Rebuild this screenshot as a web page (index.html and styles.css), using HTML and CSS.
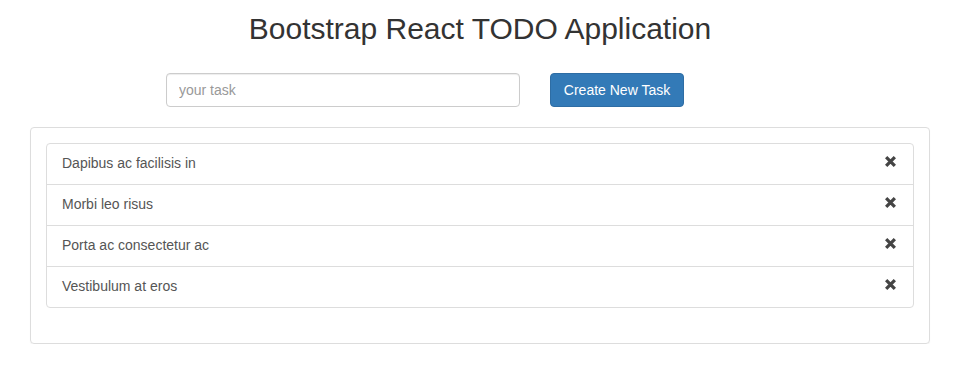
FILE: index.html
```html
<!DOCTYPE html>
<html lang="en">
<head>
    <meta charset="UTF-8">
    <meta name="viewport" content="width=device-width, initial-scale=1.0">
    <title>Bootstrap React TODO Application</title>
    <link rel="stylesheet" href="styles.css">
</head>
<body>
    <div class="container">
        <h1 class="title">Bootstrap React TODO Application</h1>
        <form class="task-form" onsubmit="event.preventDefault();">
            <input type="text" class="task-input" placeholder="your task">
            <button type="submit" class="btn-primary">Create New Task</button>
        </form>
        <div class="panel">
            <ul class="list-group">
                <li class="list-item">
                    <span>Dapibus ac facilisis in</span>
                    <svg class="remove" viewBox="0 0 12 12"><path d="M2 2 L10 10 M10 2 L2 10"/></svg>
                </li>
                <li class="list-item">
                    <span>Morbi leo risus</span>
                    <svg class="remove" viewBox="0 0 12 12"><path d="M2 2 L10 10 M10 2 L2 10"/></svg>
                </li>
                <li class="list-item">
                    <span>Porta ac consectetur ac</span>
                    <svg class="remove" viewBox="0 0 12 12"><path d="M2 2 L10 10 M10 2 L2 10"/></svg>
                </li>
                <li class="list-item">
                    <span>Vestibulum at eros</span>
                    <svg class="remove" viewBox="0 0 12 12"><path d="M2 2 L10 10 M10 2 L2 10"/></svg>
                </li>
            </ul>
        </div>
    </div>
</body>
</html>
```

FILE: styles.css
```css
body {
    font-family: 'Liberation Sans', Arial, sans-serif;
    font-size: 14px;
    line-height: 1.42857;
    color: #333;
    background: #fff;
    margin: 0;
}

.container {
    padding: 0 28px 0 30px;
}

.title {
    font-size: 30px;
    font-weight: 500;
    line-height: 1.1;
    text-align: center;
    margin: 12px 0 28px;
}

.task-form {
    display: flex;
    align-items: center;
    margin: 0 0 20px 136px;
}

.task-input {
    box-sizing: border-box;
    width: 354px;
    height: 34px;
    padding: 6px 12px;
    font-family: inherit;
    font-size: 14px;
    color: #555;
    border: 1px solid #ccc;
    border-radius: 4px;
    box-shadow: inset 0 1px 1px rgba(0, 0, 0, 0.075);
}

.task-input::placeholder {
    color: #999;
}

.btn-primary {
    box-sizing: border-box;
    margin-left: 30px;
    width: 134px;
    height: 34px;
    padding: 6px 12px;
    font-family: inherit;
    font-size: 14px;
    color: #fff;
    background: #337ab7;
    border: 1px solid #2e6da4;
    border-radius: 4px;
    cursor: pointer;
}

.panel {
    border: 1px solid #ddd;
    border-radius: 4px;
    padding: 15px;
    box-shadow: 0 1px 1px rgba(0, 0, 0, 0.05);
}

.list-group {
    list-style: none;
    padding: 0;
    margin: 0 0 20px;
}

.list-item {
    display: flex;
    justify-content: space-between;
    align-items: center;
    padding: 10px 15px;
    color: #555;
    border: 1px solid #ddd;
    margin-bottom: -1px;
}

.list-item:first-child {
    border-radius: 4px 4px 0 0;
}

.list-item:last-child {
    border-radius: 0 0 4px 4px;
    margin-bottom: 0;
}

.remove {
    width: 13px;
    height: 13px;
    margin: 0 1px 4px 0;
    fill: none;
    stroke: #444;
    stroke-width: 3;
}
```
